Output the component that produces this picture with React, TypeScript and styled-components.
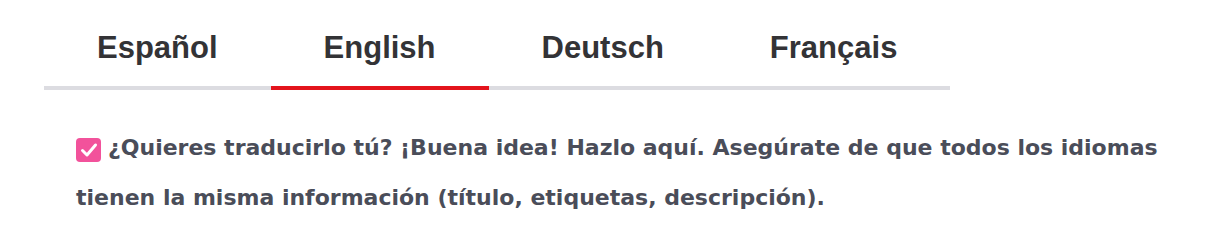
import styled, { createGlobalStyle } from "styled-components";

const GlobalStyle = createGlobalStyle`
    body {
        margin: 0;
        background: #ffffff;
    }
`;

const Page = styled.div`
    padding: 12px 0 0 44px;
`;

const TabBar = styled.div`
    display: flex;
    width: fit-content;
`;

const Tab = styled.div<{ $active?: boolean }>`
    padding: 18px 53px 20px;
    font-family: "Liberation Sans", Arial, sans-serif;
    font-weight: 700;
    font-size: 31px;
    line-height: 36px;
    color: #333336;
    border-bottom: 4px solid ${(p) => (p.$active ? "#e3141c" : "#dcdce1")};
    cursor: pointer;
`;

const Note = styled.p`
    margin: 33px 0 0 32px;
    max-width: 1110px;
    font-family: "DejaVu Sans", sans-serif;
    font-weight: 700;
    font-size: 22px;
    line-height: 50px;
    color: #4a4d59;
`;

const CheckBox = styled.span`
    display: inline-flex;
    align-items: center;
    justify-content: center;
    width: 25px;
    height: 24px;
    margin-right: 7px;
    vertical-align: -3px;
    border-radius: 4px;
    background-color: #f2529b;
`;

const languages = [
    { id: "es", name: "Español" },
    { id: "en", name: "English" },
    { id: "de", name: "Deutsch" },
    { id: "fr", name: "Français" },
];

export default function App() {
    return (
        <Page>
            <GlobalStyle />
            <TabBar>
                {languages.map(({ id, name }) => (
                    <Tab key={id} $active={id === "en"}>
                        {name}
                    </Tab>
                ))}
            </TabBar>
            <Note>
                <CheckBox>
                    <svg width="18" height="16" viewBox="0 0 18 16">
                        <path
                            d="M2.5 8.5 L7 13 L15.5 3"
                            fill="none"
                            stroke="#ffffff"
                            strokeWidth="3"
                            strokeLinecap="round"
                            strokeLinejoin="round"
                        />
                    </svg>
                </CheckBox>
                ¿Quieres traducirlo tú? ¡Buena idea! Hazlo aquí. Asegúrate de que todos los idiomas
                tienen la misma información (título, etiquetas, descripción).
            </Note>
        </Page>
    );
}
